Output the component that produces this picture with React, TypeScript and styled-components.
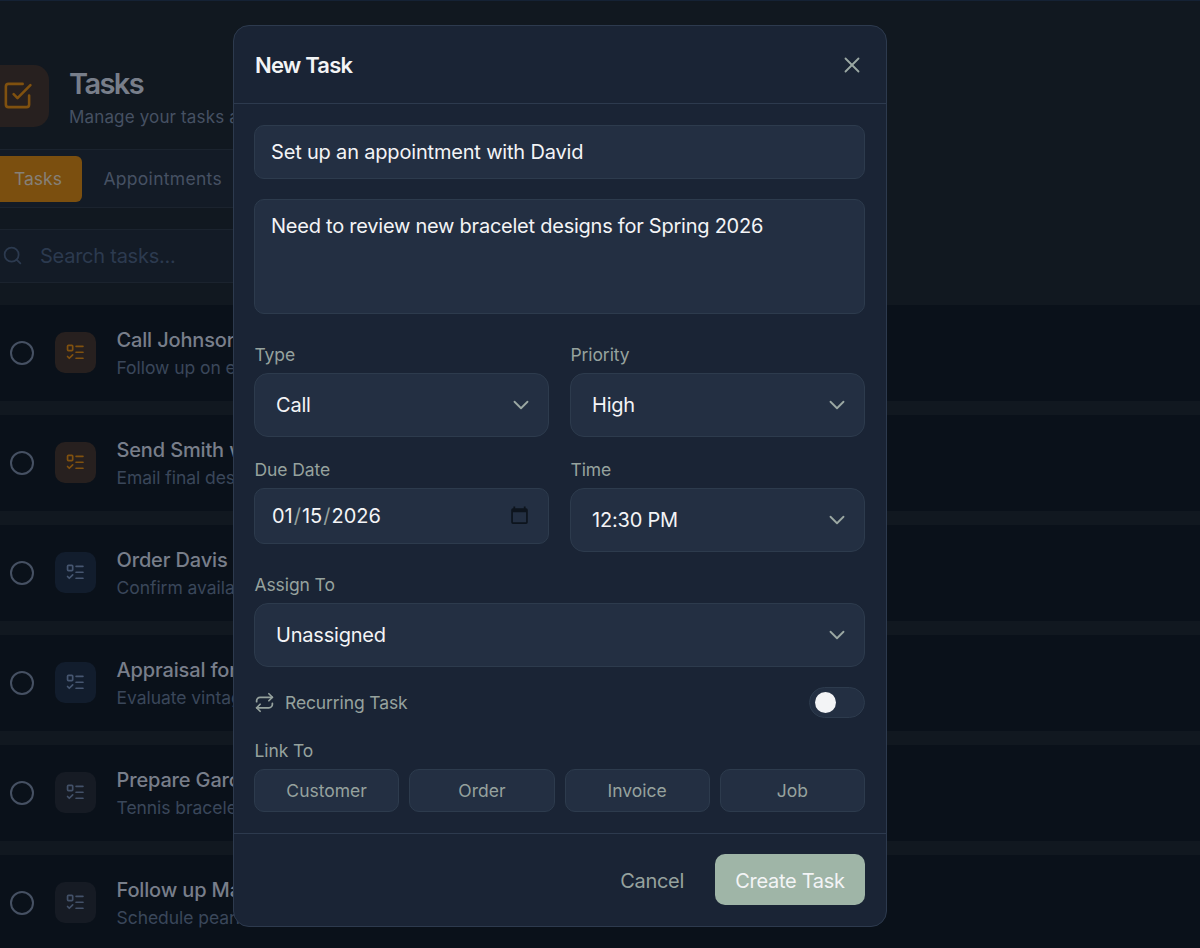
import React from "react";
import styled, { createGlobalStyle } from "styled-components";
import { ChevronDown, ListTodo, Repeat, Search, X } from "lucide-react";

const GlobalStyle = createGlobalStyle`
  * { box-sizing: border-box; }
  html, body { margin: 0; height: 100%; overflow: hidden; background: #111820; }
  body { font-family: Inter, "Liberation Sans", sans-serif; -webkit-font-smoothing: antialiased; }
`;

const Screen = styled.div`
  position: relative;
  width: 1200px;
  height: 948px;
  overflow: hidden;
  background: #111820;
  border-top: 1px solid #152235;
`;

const Page = styled.main`
  display: flex;
  flex-direction: column;
  margin-left: -14px;
  padding-top: 64px;
`;

const PageHeader = styled.header`
  display: flex;
  align-items: center;
  gap: 21px;
  height: 62px;
`;

const PageIcon = styled.div`
  display: grid;
  place-items: center;
  width: 63px;
  height: 62px;
  padding: 0 1px 1px 0;
  border-radius: 15px;
  background: #27201f;
  color: #80510f;
`;

const PageTitle = styled.h1`
  margin: 4px 0 1px -1px;
  font-size: 29px;
  line-height: 36px;
  font-weight: 600;
  letter-spacing: -1.6px;
  color: #787e8a;
`;

const PageSubtitle = styled.p`
  margin: 0 0 0 -1px;
  font-size: 17px;
  line-height: 28px;
  letter-spacing: 0.15px;
  color: #465163;
  white-space: nowrap;
`;

const TabBar = styled.nav`
  display: flex;
  align-items: center;
  width: 400px;
  height: 59px;
  margin-top: 22px;
  padding: 0 6px 0 6px;
  border: 1px solid #1b232e;
  border-radius: 10px;
  background: #131b26;
`;

const Tab = styled.button<{ $active?: boolean }>`
  height: 46px;
  padding: 0 20.5px 0 21px;
  border: 0;
  border-radius: 6px;
  background: ${(p) => (p.$active ? "#7b4f0f" : "transparent")};
  color: ${(p) => (p.$active ? "#868078" : "#465163")};
  font: 400 17.5px/26px Inter, sans-serif;
  letter-spacing: ${(p) => (p.$active ? "0" : "0.3px")};
`;

const SearchBar = styled.div`
  display: flex;
  align-items: center;
  gap: 17px;
  width: 620px;
  height: 54px;
  margin-top: 21px;
  padding-left: 15px;
  border: 1px solid #1b232e;
  border-radius: 10px;
  background: #131b26;
  color: #2c3a4f;
  font-size: 20px;
  letter-spacing: -0.25px;
  svg { margin-bottom: 2px; }
`;

const TaskList = styled.ul`
  display: flex;
  flex-direction: column;
  gap: 14px;
  margin: 22px 0 0;
  padding: 0;
  list-style: none;
`;

const TaskRow = styled.li`
  display: flex;
  align-items: center;
  height: 96px;
  padding-left: 24px;
  background: #0a111a;
`;

const Circle = styled.span`
  width: 24px;
  height: 24px;
  margin-bottom: 1px;
  border: 2px solid #465163;
  border-radius: 50%;
`;

const tones = {
  amber: { bg: "#27201f", fg: "#80510f" },
  blue: { bg: "#121d2d", fg: "#465670" },
  gray: { bg: "#161b24", fg: "#435168" },
};

const TaskIcon = styled.span<{ $tone: keyof typeof tones }>`
  display: grid;
  place-items: center;
  width: 41px;
  height: 41px;
  margin: 0 20.5px 1px 21px;
  border-radius: 10px;
  background: ${(p) => tones[p.$tone].bg};
  color: ${(p) => tones[p.$tone].fg};
`;

const TaskName = styled.div`
  font-size: 20px;
  line-height: 28px;
  font-weight: 500;
  letter-spacing: -0.15px;
  color: #787e8a;
  white-space: nowrap;
`;

const TaskNote = styled.div`
  font-size: 17.5px;
  line-height: 27px;
  letter-spacing: -0.05px;
  color: #3a475a;
  white-space: nowrap;
`;

const Dialog = styled.section`
  position: absolute;
  left: 233px;
  top: 24px;
  width: 654px;
  height: 902px;
  display: flex;
  flex-direction: column;
  border: 1px solid #2d3a4e;
  border-radius: 16px;
  background: #1a2435;
`;

const DialogHeader = styled.header`
  display: flex;
  align-items: center;
  justify-content: space-between;
  height: 78px;
  padding: 0 21px 0 21px;
  border-bottom: 1px solid #2d3a4e;
  color: #9ba8a3;
`;

const DialogTitle = styled.h2`
  margin: 0;
  font-size: 22px;
  font-weight: 600;
  letter-spacing: -0.8px;
  color: #f3f4f6;
`;

const DialogBody = styled.div`
  display: flex;
  flex-direction: column;
  flex: 1;
  padding: 21px 21px 0 20px;
`;

const Box = styled.div`
  border: 1px solid #2d3b4d;
  border-radius: 10px;
  background: #232f42;
  color: #f3f4f6;
  font-size: 20px;
  line-height: 28px;
  letter-spacing: -0.2px;
`;

const TextField = styled(Box)`
  height: 53.5px;
  padding: 12px 16px;
  letter-spacing: -0.18px;
`;

const TextArea = styled(Box)`
  height: 115px;
  margin-top: 20px;
  padding: 12px 16px;
  letter-spacing: -0.24px;
`;

const FieldGrid = styled.div`
  display: grid;
  grid-template-columns: 1fr 1fr;
  column-gap: 21px;
  row-gap: 15px;
  margin-top: 23.5px;
`;

const Field = styled.div<{ $wide?: boolean }>`
  grid-column: ${(p) => (p.$wide ? "1 / -1" : "auto")};
`;

const Label = styled.div`
  height: 36px;
  padding-left: 0.5px;
  line-height: 36px;
  font-size: 17.5px;
  letter-spacing: -0.1px;
  color: #96a29e;
`;

const SelectBox = styled(Box)`
  display: flex;
  align-items: center;
  justify-content: space-between;
  height: 64px;
  padding: 0 14px 0 21px;
  border-radius: 14px;
  svg { margin-bottom: 1px; color: #9ba8a3; }
`;

const DateBox = styled(Box)`
  display: flex;
  align-items: center;
  justify-content: space-between;
  height: 56px;
  padding: 0 20px 0 17px;
  letter-spacing: 0;
  i { padding: 0 1px; font-style: normal; color: #96a29e; }
  svg { margin-bottom: 2px; color: #0d141d; }
`;

const RecurringRow = styled.div`
  display: flex;
  align-items: center;
  gap: 10px;
  height: 31px;
  margin-top: 20px;
  font-size: 17.5px;
  letter-spacing: -0.12px;
  color: #96a29e;
`;

const Toggle = styled.span`
  display: flex;
  align-items: center;
  width: 56px;
  height: 31px;
  margin-left: auto;
  padding-left: 5px;
  border: 1px solid #2d3b4d;
  border-radius: 16px;
  background: #232f42;
`;

const Knob = styled.span`
  width: 21px;
  height: 21px;
  border-radius: 50%;
  background: #f3f4f6;
`;

const LinkLabel = styled(Label)`
  margin-top: 15px;
`;

const LinkGrid = styled.div`
  display: grid;
  grid-template-columns: repeat(4, 1fr);
  gap: 10px;
`;

const LinkButton = styled.button`
  height: 43px;
  border: 1px solid #2d3b4d;
  border-radius: 10px;
  background: #232f42;
  color: #96a29e;
  font: 400 17.5px/26px Inter, sans-serif;
`;

const DialogFooter = styled.footer`
  display: flex;
  align-items: center;
  justify-content: flex-end;
  gap: 31px;
  height: 93px;
  padding: 0 21px 1px 0;
  border-top: 1px solid #2d3a4e;
`;

const CancelButton = styled.button`
  padding: 2px 0 0;
  border: 0;
  background: none;
  color: #96a29e;
  font: 400 20px/28px Inter, sans-serif;
  letter-spacing: -0.3px;
`;

const CreateButton = styled.button`
  width: 150px;
  height: 51px;
  padding: 2px 0 0;
  border: 0;
  border-radius: 10px;
  background: #9fb5a7;
  color: #f3f4f6;
  font: 400 20px/28px Inter, sans-serif;
  letter-spacing: -0.3px;
`;

const CheckSquareIcon = () => (
  <svg width="31" height="31" viewBox="0 0 24 24" fill="none" stroke="currentColor" strokeWidth="2" strokeLinecap="round" strokeLinejoin="round">
    <path d="m9 11 3 3L22 4" />
    <path d="M21 12v7a2 2 0 0 1-2 2H5a2 2 0 0 1-2-2V5a2 2 0 0 1 2-2h11" />
  </svg>
);

const CalendarIcon = () => (
  <svg width="17" height="19" viewBox="0 0 17 19" fill="currentColor">
    <path fillRule="evenodd" d="M2.4 0.5h1.8v1.7h8.6V0.5h1.8v1.7h.4a1.8 1.8 0 0 1 1.8 1.8v12.2a1.8 1.8 0 0 1-1.8 1.8H2a1.8 1.8 0 0 1-1.8-1.8V4A1.8 1.8 0 0 1 2 2.200h.4zM1.900 6.200v10.100h13.200V6.200z" />
  </svg>
);

const tasks: { name: string; note: string; tone: keyof typeof tones }[] = [
  { name: "Call Johnson", note: "Follow up on en", tone: "amber" },
  { name: "Send Smith w", note: "Email final desi", tone: "amber" },
  { name: "Order Davis", note: "Confirm availa", tone: "blue" },
  { name: "Appraisal for", note: "Evaluate vintag", tone: "blue" },
  { name: "Prepare Garc", note: "Tennis bracelet", tone: "gray" },
  { name: "Follow up Ma", note: "Schedule pearl", tone: "gray" },
];

const Select = ({ value }: { value: string }) => (
  <SelectBox>
    <span>{value}</span>
    <ChevronDown size={26} strokeWidth={1.7} />
  </SelectBox>
);

export default function App() {
  return (
    <Screen>
      <GlobalStyle />
      <Page>
        <PageHeader>
          <PageIcon><CheckSquareIcon /></PageIcon>
          <div>
            <PageTitle>Tasks</PageTitle>
            <PageSubtitle>Manage your tasks an</PageSubtitle>
          </div>
        </PageHeader>
        <TabBar>
          <Tab $active>Tasks</Tab>
          <Tab>Appointments</Tab>
        </TabBar>
        <SearchBar>
          <Search size={21} strokeWidth={2} />
          <span>Search tasks...</span>
        </SearchBar>
        <TaskList>
          {tasks.map((t) => (
            <TaskRow key={t.name}>
              <Circle />
              <TaskIcon $tone={t.tone}><ListTodo size={20.5} strokeWidth={2} /></TaskIcon>
              <div>
                <TaskName>{t.name}</TaskName>
                <TaskNote>{t.note}</TaskNote>
              </div>
            </TaskRow>
          ))}
        </TaskList>
      </Page>
      <Dialog role="dialog" aria-label="New Task">
        <DialogHeader>
          <DialogTitle>New Task</DialogTitle>
          <X size={26} strokeWidth={1.7} />
        </DialogHeader>
        <DialogBody>
          <TextField>Set up an appointment with David</TextField>
          <TextArea>Need to review new bracelet designs for Spring 2026</TextArea>
          <FieldGrid>
            <Field><Label>Type</Label><Select value="Call" /></Field>
            <Field><Label>Priority</Label><Select value="High" /></Field>
            <Field>
              <Label>Due Date</Label>
              <DateBox><span>01<i>/</i>15<i>/</i>2026</span><CalendarIcon /></DateBox>
            </Field>
            <Field><Label>Time</Label><Select value="12:30 PM" /></Field>
            <Field $wide><Label>Assign To</Label><Select value="Unassigned" /></Field>
          </FieldGrid>
          <RecurringRow>
            <Repeat size={21} strokeWidth={2} />
            <span>Recurring Task</span>
            <Toggle><Knob /></Toggle>
          </RecurringRow>
          <LinkLabel>Link To</LinkLabel>
          <LinkGrid>
            {["Customer", "Order", "Invoice", "Job"].map((l) => (
              <LinkButton key={l}>{l}</LinkButton>
            ))}
          </LinkGrid>
        </DialogBody>
        <DialogFooter>
          <CancelButton>Cancel</CancelButton>
          <CreateButton>Create Task</CreateButton>
        </DialogFooter>
      </Dialog>
    </Screen>
  );
}
